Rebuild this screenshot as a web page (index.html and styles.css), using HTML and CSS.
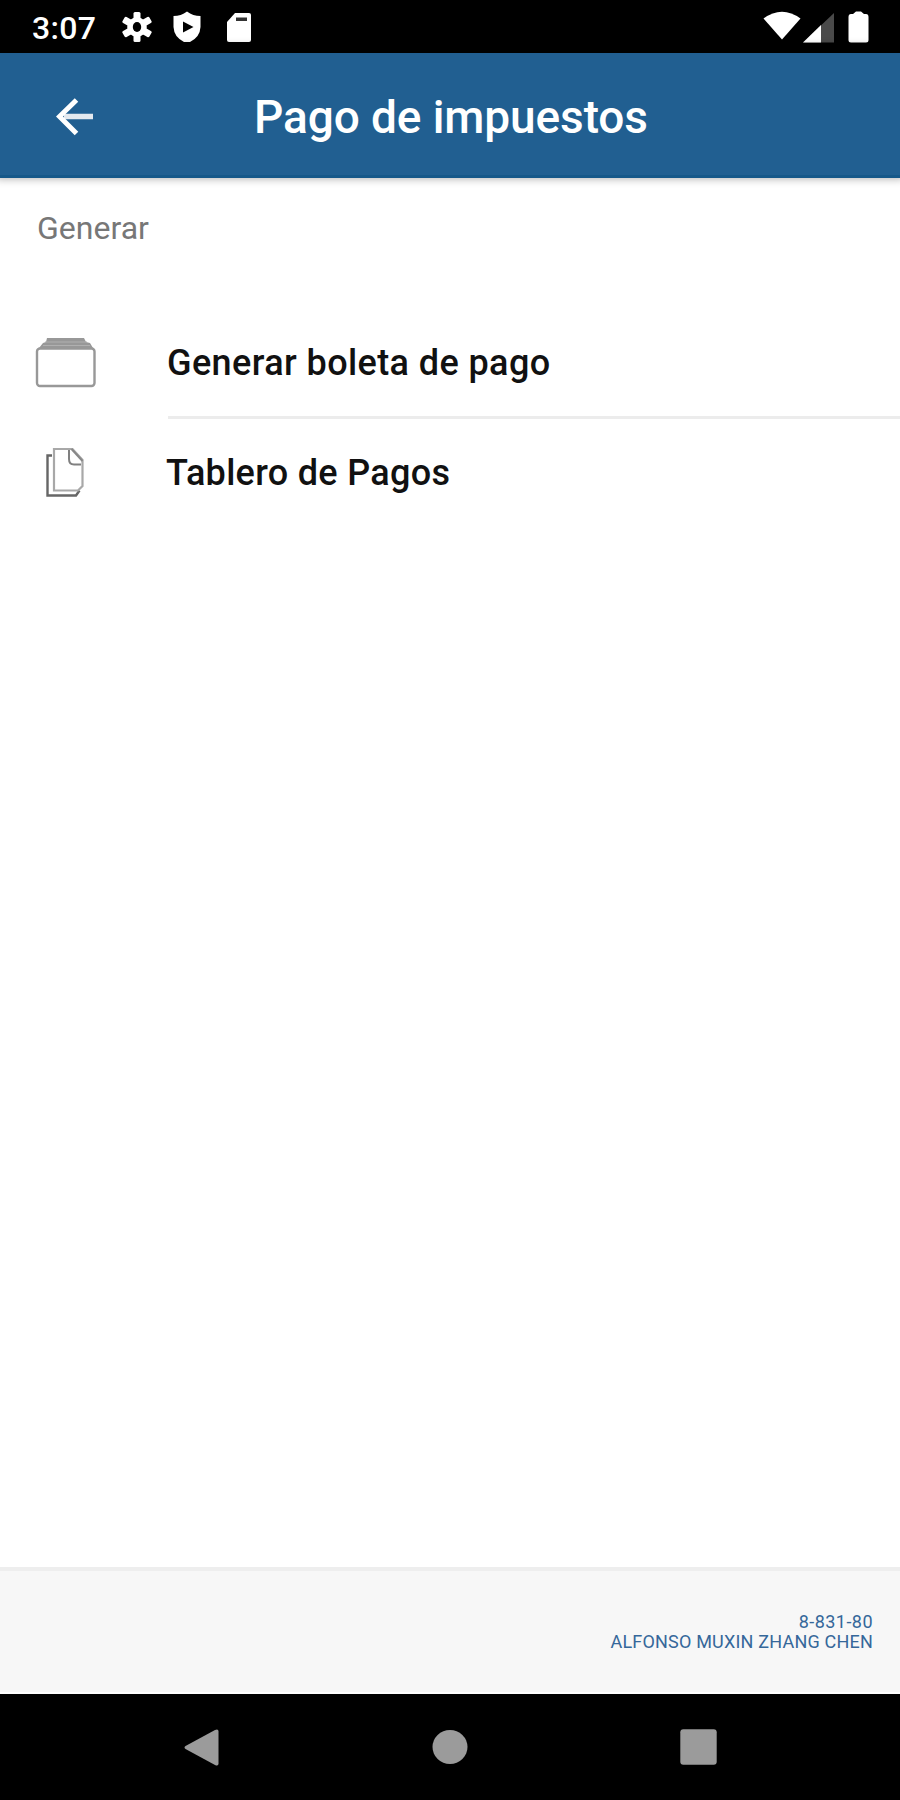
FILE: index.html
```html
<!DOCTYPE html>
<html lang="es">
<head>
<meta charset="utf-8">
<title>Pago de impuestos</title>
<link rel="stylesheet" href="styles.css">
</head>
<body>
<div class="screen">
  <div class="status">
    <span class="clock">3:07</span>
    <svg class="gear" width="30" height="32" viewBox="-15 -16 30 32"><g fill="#fff"><rect x="-3.500" y="-15" width="7" height="30" rx="1.500"/><rect x="-3.500" y="-15.500" width="7" height="31" rx="1.500" transform="rotate(60)"/><rect x="-3.500" y="-15.500" width="7" height="31" rx="1.500" transform="rotate(120)"/><circle r="9.800"/></g><ellipse rx="4.200" ry="5" fill="#000"/></svg>
    <svg class="shield" width="28" height="32" viewBox="0 0 28 32"><path d="M14 .5Q20 5 27.500 5V16Q27 26 17 31H11Q1 26 .5 16V5Q8 5 14 .5Z" fill="#fff"/><path d="M10 10.500L20.500 16L10 21.500Z" fill="#000"/></svg>
    <svg class="card" width="26" height="31" viewBox="0 0 26 31"><path d="M9 1H23Q25 1 25 3V28Q25 30 23 30H3Q1 30 1 28V10Z" fill="#fff"/><path d="M10 5.500H21V9H10Z" fill="#333"/></svg>
    <span class="grow"></span>
    <svg class="wifi" width="38" height="29" viewBox="0 0 38 29"><path d="M.5 7.500Q19-6 37.500 7.500L19 28.500Z" fill="#fff"/></svg>
    <svg class="signal" width="32" height="31" viewBox="0 0 32 31"><path d="M0 30.500L31 1V30.500Z" fill="#4a4a4a"/><path d="M0 30.500L18 13V30.500Z" fill="#fff"/></svg>
    <svg class="battery" width="21" height="32" viewBox="0 0 21 32"><path d="M5 3L8 .5H13L16 3H18Q20.500 3 20.500 6V29Q20.500 31.500 18 31.500H3Q.5 31.500 .5 29V6Q.5 3 3 3Z" fill="#fff"/></svg>
  </div>
  <header class="appbar">
    <svg class="back" width="38" height="38" viewBox="0 0 38 38" fill="none" stroke-width="5"><path d="M8 18.500H37" stroke="#e4e9ef" stroke-width="5.500"/><path d="M20.500 2L3.500 18.500L20.500 35.500" stroke="#fff"/></svg>
    <h1 class="title">Pago de impuestos</h1>
  </header>
  <main class="content">
    <h2 class="section">Generar</h2>
    <div class="row">
      <span class="icon"><svg width="62" height="52" viewBox="0 0 62 52"><path d="M12 1H49L51 5L55 6L58 11H4L8 6L11 5Z" fill="#989898"/><path d="M10 5H52M8 8.500H55" stroke="#b0b0b0" stroke-width="1"/><rect x="2" y="11.500" width="57.500" height="37.500" rx="3" fill="#fff" stroke="#989898" stroke-width="2.400"/></svg></span>
      <span class="label label-first">Generar boleta de pago</span>
    </div>
    <div class="row">
      <span class="icon"><svg width="40" height="52" viewBox="0 0 40 52" fill="none"><path d="M7 8.500H2.500V48.500H31L34.500 43.500" stroke="#666" stroke-width="2.400"/><path d="M9 2H27.500L37.500 13V39L33 43.500H9Z" fill="#fff" stroke="#a8a8a8" stroke-width="2.200"/><path d="M24 3V12Q24 17.500 29 17.500H36" stroke="#808080" stroke-width="2"/><path d="M26.500 2L37.500 14" stroke="#888" stroke-width="2"/></svg></span>
      <span class="label label-second">Tablero de Pagos</span>
    </div>
  </main>
  <footer class="user">
    <span class="ident">8-831-80</span>
    <span class="name">ALFONSO MUXIN ZHANG CHEN</span>
  </footer>
  <nav class="navbar">
    <svg width="35" height="37" viewBox="0 0 35 37"><path d="M1.500 17L31 1Q34.500-.5 34.500 2.500V34.500Q34.500 37.500 31 36L1.500 20Q-.5 18.500 1.500 17Z" fill="#9b9b9b"/></svg>
    <svg width="36" height="36" viewBox="0 0 36 36"><ellipse cx="18" cy="18" rx="17.500" ry="17" fill="#9b9b9b"/></svg>
    <svg width="37" height="36" viewBox="0 0 37 36"><rect x=".3" y=".3" width="36.400" height="35.400" rx="3" fill="#9b9b9b"/></svg>
  </nav>
</div>
</body>
</html>
```
FILE: styles.css
```css
* { box-sizing: border-box; }
body { margin: 0; font-family: Roboto, sans-serif; background: #fff; }
svg { display: block; flex: none; }
.screen { width: 900px; height: 1800px; display: flex; flex-direction: column; overflow: hidden; }
.status { height: 53px; background: #000; display: flex; align-items: flex-start; padding: 11px 31px 0 32px; }
.clock { width: 90px; font-size: 32px; line-height: 35px; font-weight: 500; letter-spacing: .3px; color: #fff; white-space: nowrap; }
.shield { margin-left: 21px; }
.card { margin: 1px 0 0 25px; }
.grow { flex: 1; }
.signal { margin: 1px 13px 0 2px; }
.appbar { position: relative; height: 125px; background: #215f91; border-bottom: 3px solid #165889; box-shadow: 0 -3px 8px 4px rgba(0, 0, 0, .3); display: flex; align-items: center; padding: 0 0 0 56px; }
.back { margin-top: 5px; }
.title { margin: 5px 0 0 160px; font-size: 46px; line-height: 60px; font-weight: 500; letter-spacing: -.1px; color: #fff; white-space: nowrap; }
.content { flex: 1; padding-top: 31px; }
.section { margin: 0 0 67px 37px; font-size: 32px; line-height: 38px; font-weight: 400; color: #777; }
.row { display: flex; height: 109px; }
.icon { width: 168px; padding: 23px 0 0 35px; }
.row + .row .icon { width: 167px; padding: 24px 0 0 45px; }
.label { flex: 1; font-size: 36px; line-height: 99px; font-weight: 500; color: #111; white-space: nowrap; }
.label-first { height: 105px; border-bottom: 3px solid #ececec; letter-spacing: .4px; text-indent: -1px; }
.label-second { line-height: 100px; letter-spacing: .3px; text-indent: -1px; }
.user { height: 127px; background: #f7f7f7; border-top: 4px solid #eee; border-bottom: 2px solid #fff; display: flex; flex-direction: column; align-items: flex-end; padding: 41px 27px 0 0; font-size: 18px; line-height: 20px; color: #35679a; }
.ident { letter-spacing: .45px; }
.name { letter-spacing: .2px; }
.navbar { height: 106px; background: #000; display: flex; align-items: center; justify-content: space-between; padding: 0 183px 0 184px; }
```
